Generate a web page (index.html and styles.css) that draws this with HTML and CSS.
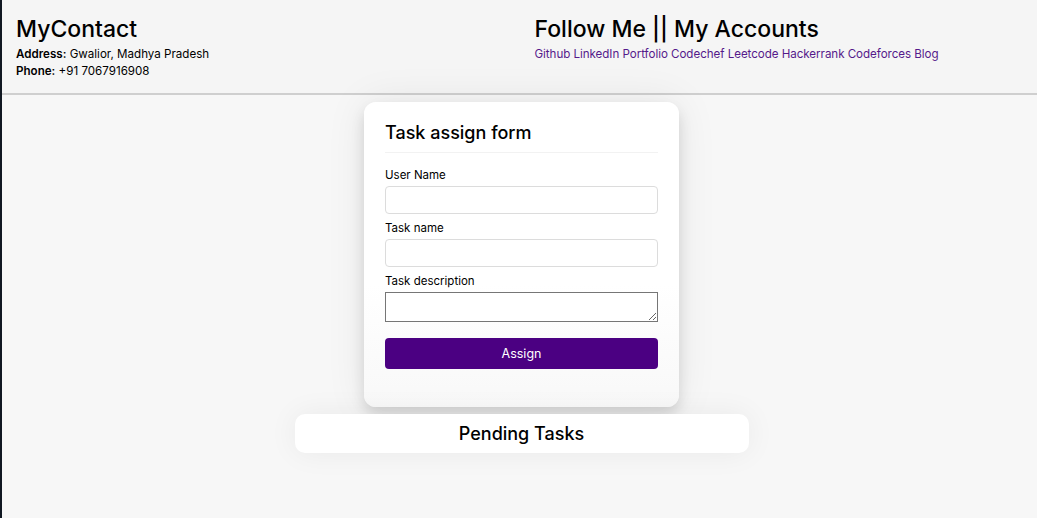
FILE: index.html
```html
<!DOCTYPE html>
<html lang="en">
<head>
<meta charset="utf-8">
<title>Task assign</title>
<link rel="stylesheet" href="styles.css">
</head>
<body>
<header class="topbar">
  <div class="col">
    <h1 class="brand">MyContact</h1>
    <p class="info"><b>Address:</b> Gwalior, Madhya Pradesh</p>
    <p class="info"><b>Phone:</b> +91 7067916908</p>
  </div>
  <div class="col">
    <h2 class="brand">Follow Me || My Accounts</h2>
    <nav class="links">
      <a href="#">Github</a> <a href="#">LinkedIn</a> <a href="#">Portfolio</a> <a href="#">Codechef</a> <a href="#">Leetcode</a> <a href="#">Hackerrank</a> <a href="#">Codeforces</a> <a href="#">Blog</a>
    </nav>
  </div>
</header>
<main class="content">
  <form class="card">
    <h3 class="card-title">Task assign form</h3>
    <label class="lbl">User Name</label>
    <input class="field" type="text">
    <label class="lbl">Task name</label>
    <input class="field" type="text">
    <label class="lbl">Task description</label>
    <textarea class="area"></textarea>
    <button class="btn" type="button">Assign</button>
  </form>
  <section class="pending">
    <h3 class="pending-title">Pending Tasks</h3>
  </section>
</main>
</body>
</html>
```
FILE: styles.css
```css
html, body {
  margin: 0;
  padding: 0;
  height: 100%;
}
body {
  background: #f7f7f7;
  border-left: 2px solid #111822;
  font-family: "Inter", "Open Sans", sans-serif;
  color: #000;
  box-sizing: border-box;
}
.topbar {
  display: flex;
  background: #f5f5f5;
  border-bottom: 2px solid #cfcfcf;
  padding: 14px 0 13px;
}
.col {
  flex: 1;
  padding: 0 14px;
}
.col + .col {
  padding-left: 16px;
}
.brand {
  margin: 0 0 2px;
  font-size: 23px;
  font-weight: 500;
  line-height: 30px;
  letter-spacing: 0;
}
.info {
  margin: 0;
  font-size: 11.6px;
  line-height: 17px;
}
.info b {
  font-weight: 600;
}
.links {
  font-size: 11.6px;
  line-height: 17px;
  letter-spacing: -0.05px;
}
.links a {
  color: #551a8b;
  text-decoration: none;
}
.content {
  display: flex;
  flex-direction: column;
  align-items: center;
  padding: 7px 0 0 4px;
}
.card {
  width: 315px;
  box-sizing: border-box;
  padding: 19px 21px 38px;
  background: linear-gradient(#ffffff 60%, #f8f8f8);
  border-radius: 12px;
  box-shadow: 0 0 40px rgba(0,0,0,0.08), 0 8px 14px rgba(0,0,0,0.12);
  display: flex;
  flex-direction: column;
}
.card-title {
  margin: 0;
  font-size: 18px;
  font-weight: 500;
  line-height: 24px;
  padding-bottom: 7px;
  border-bottom: 1px solid #f2f2f2;
}
.lbl {
  font-size: 11.5px;
  line-height: 18px;
  margin-top: 5px;
}
.card-title + .lbl {
  margin-top: 13px;
}
.field {
  margin: 2px 0 0;
  height: 28px;
  box-sizing: border-box;
  border: 1px solid #dcdcdc;
  border-radius: 4px;
  background: #fff;
  padding: 0 8px;
}
.area {
  margin: 2px 0 0;
  height: 30px;
  box-sizing: border-box;
  border: 1px solid #767676;
  border-radius: 0;
  background: #fff;
  font-family: inherit;
}
.btn {
  margin-top: 16px;
  height: 31px;
  border: none;
  border-radius: 4px;
  background: #4b0082;
  color: #fff;
  font-family: inherit;
  font-size: 12.5px;
}
.pending {
  margin-top: 7px;
  width: 454px;
  height: 39px;
  background: #fff;
  border-radius: 10px;
  box-shadow: 0 0 30px rgba(0,0,0,0.06);
  display: flex;
  align-items: center;
  justify-content: center;
}
.pending-title {
  margin: 0;
  font-size: 18px;
  font-weight: 500;
  line-height: 24px;
}
```
